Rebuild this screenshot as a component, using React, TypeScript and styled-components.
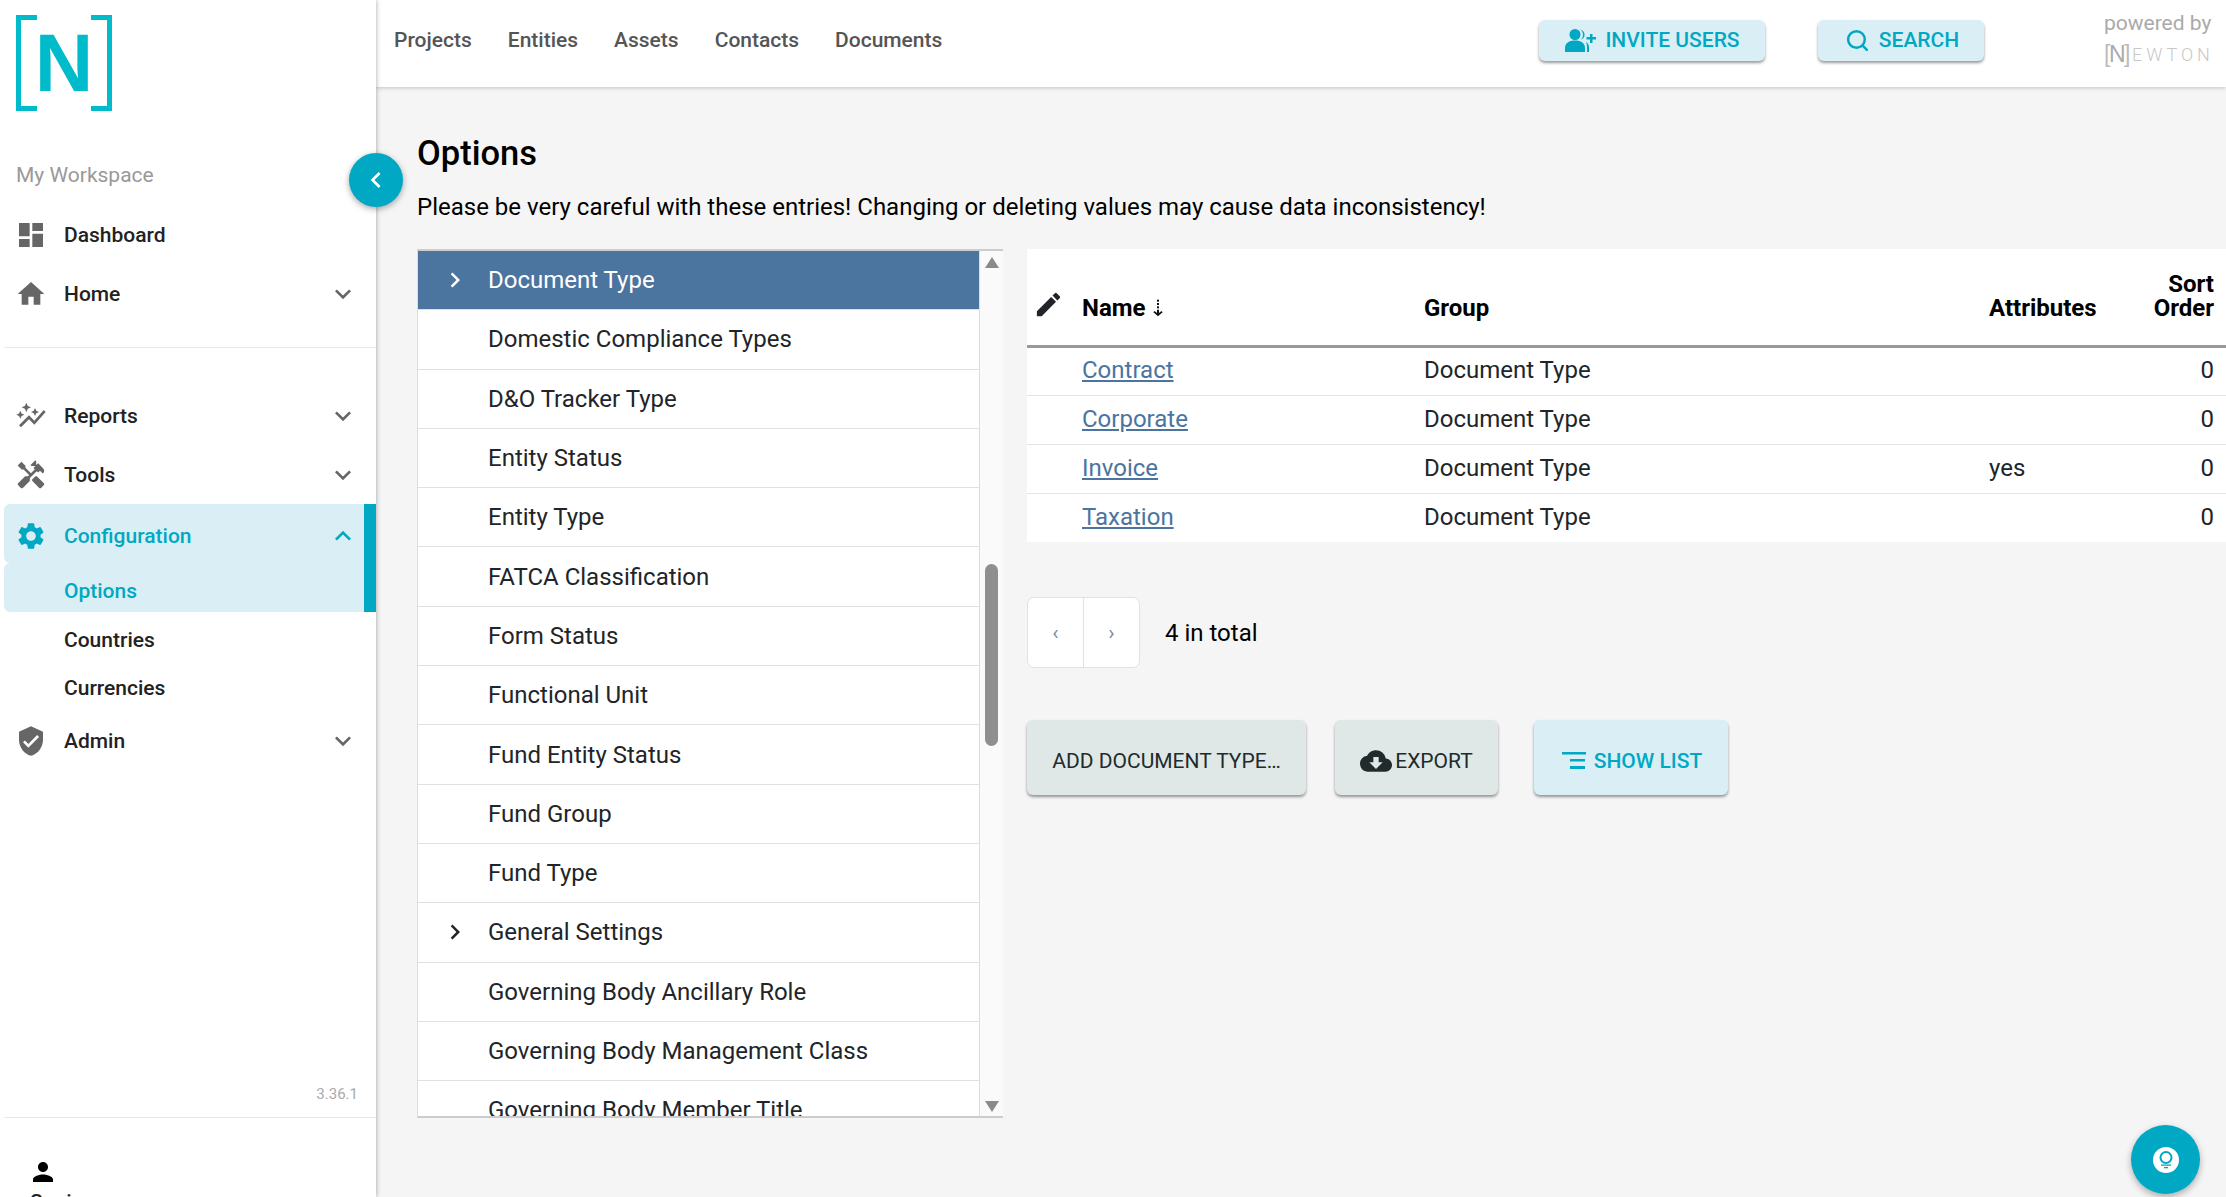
import React from "react";
import styled, { createGlobalStyle } from "styled-components";
import {
	MdDashboard,
	MdHome,
	MdExpandMore,
	MdExpandLess,
	MdAutoGraph,
	MdHandyman,
	MdSettings,
	MdVerifiedUser,
	MdPerson,
	MdEdit,
	MdCloudDownload,
	MdChevronLeft,
	MdChevronRight,
} from "react-icons/md";
import { LuSearch } from "react-icons/lu";

const teal = "#00a8c3";
const paleTeal = "#daeff5";

const GlobalStyle = createGlobalStyle`
	html, body {
		margin: 0;
		padding: 0;
		height: 100%;
		overflow: hidden;
	}
	body {
		font-family: Roboto, "Liberation Sans", sans-serif;
		color: #212529;
		background: #f5f5f5;
	}
	* {
		box-sizing: border-box;
	}
`;

const Page = styled.div`
	display: grid;
	grid-template-columns: 376px 1fr;
	grid-template-rows: 87px 1fr;
	height: 100vh;
	overflow: hidden;
	position: relative;
`;

// Left column
const Sidebar = styled.aside`
	grid-row: 1 / span 2;
	grid-column: 1;
	position: relative;
	z-index: 2;
	display: flex;
	flex-direction: column;
	padding-left: 4px;
	background: #fff;
	box-shadow: 1px 0 4px rgba(0, 0, 0, 0.25);
	height: 1197px;
`;

const LogoArea = styled.div`
	height: 150px;
	padding: 15px 0 0 12px;
`;

const LogoMark = styled.div`
	position: relative;
	display: flex;
	align-items: center;
	justify-content: center;
	width: 96px;
	height: 96px;
	font-family: "Liberation Sans", sans-serif;
	font-weight: 700;
	font-size: 81px;
	line-height: 1;
	color: #00bbca;
`;

const Bracket = styled.span<{ $side: "left" | "right" }>`
	position: absolute;
	top: 0;
	bottom: 0;
	width: 21px;
	border: 5px solid #00bbca;
	${(p) => (p.$side === "left" ? "left: 0; border-right: 0;" : "right: 0; border-left: 0;")}
`;

const WorkspaceLabel = styled.div`
	height: 50px;
	padding-left: 12px;
	display: flex;
	align-items: center;
	font-size: 21px;
	color: #999;
	margin-bottom: 5px;
`;

const NavRow = styled.div<{ $active?: boolean }>`
	display: flex;
	align-items: center;
	height: 59px;
	padding: ${(p) => (p.$active ? "4px 5px 0 11px" : "0 17px 0 11px")};
	font-size: 21px;
	font-weight: 500;
	color: ${(p) => (p.$active ? teal : "#222")};
	background: ${(p) => (p.$active ? paleTeal : "transparent")};
	border-radius: ${(p) => (p.$active ? "6px 0 0 6px" : "0")};
	svg.lead {
		width: 32px;
		height: 32px;
		margin-right: 17px;
		color: ${(p) => (p.$active ? teal : "#666")};
		flex-shrink: 0;
	}
	svg.caret {
		width: 32px;
		height: 32px;
		margin-left: auto;
		color: ${(p) => (p.$active ? teal : "#666")};
	}
`;

const ActiveGroup = styled.div`
	border-right: 12px solid ${teal};
`;

const SubRow = styled.div<{ $active?: boolean }>`
	display: flex;
	align-items: center;
	height: ${(p) => (p.$active ? "49px" : "48px")};
	padding: ${(p) => (p.$active ? "7px 0 0 60px" : "0 0 0 60px")};
	font-size: 21px;
	font-weight: 500;
	color: ${(p) => (p.$active ? teal : "#222")};
	background: ${(p) => (p.$active ? paleTeal : "transparent")};
	border-radius: ${(p) => (p.$active ? "6px 0 0 6px" : "0")};
`;

const SubList = styled.div`
	height: 99px;
	padding-top: 4px;
`;

const Rule = styled.hr<{ $spaced?: boolean }>`
	border: 0;
	border-top: 1px solid #e8e8e8;
	margin: ${(p) => (p.$spaced ? "24px 0 38px" : "0")};
`;

const Version = styled.div`
	margin-top: auto;
	padding: 0 18px 14px 0;
	text-align: right;
	font-size: 15px;
	color: #aaa;
`;

const UserBlock = styled.div`
	height: 79px;
	padding: 39px 0 0 24px;
	overflow: hidden;
	font-size: 21px;
	font-weight: 500;
	line-height: 1;
	svg {
		display: block;
		width: 30px;
		height: 30px;
		margin-bottom: 5px;
		color: #000;
	}
	span {
		margin-left: 2px;
	}
`;

const CollapseButton = styled.button`
	position: absolute;
	left: 349px;
	top: 153px;
	width: 54px;
	height: 54px;
	padding: 0;
	border: 0;
	border-radius: 50%;
	background: ${teal};
	color: #fff;
	display: flex;
	align-items: center;
	justify-content: center;
	box-shadow: 0 2px 6px rgba(0, 0, 0, 0.35);
	svg {
		width: 32px;
		height: 32px;
	}
`;

// Top bar
const TopBar = styled.header`
	grid-column: 2;
	grid-row: 1;
	position: relative;
	z-index: 1;
	display: flex;
	align-items: center;
	padding: 0 0 7px 18px;
	background: #fff;
	box-shadow: 0 1px 4px rgba(0, 0, 0, 0.2);
`;

const TopLink = styled.a`
	font-size: 21px;
	font-weight: 500;
	color: #555;
	margin-right: 36px;
`;

const TopActions = styled.div`
	margin-left: auto;
	display: flex;
	align-items: center;
`;

const Button = styled.button<{ $tone?: "teal" | "grey"; $height?: number }>`
	display: inline-flex;
	align-items: center;
	justify-content: center;
	height: 41px;
	padding: 0;
	border: 0;
	border-radius: 6px;
	font-family: inherit;
	font-size: 21px;
	text-transform: uppercase;
	font-weight: ${(p) => (p.$tone === "grey" ? 400 : 500)};
	color: ${(p) => (p.$tone === "grey" ? "#212b2b" : teal)};
	background: ${(p) => (p.$tone === "grey" ? "#dfe8e7" : paleTeal)};
	box-shadow: 0 2px 3px rgba(0, 0, 0, 0.4);
	white-space: nowrap;
`;

const InviteButton = styled(Button)`
	width: 226px;
	margin-right: 53px;
	svg {
		width: 32px;
		height: 24px;
		margin-right: 9px;
	}
`;

const SearchButton = styled(Button)`
	width: 166px;
	margin-right: 120px;
	padding-left: 2px;
	svg {
		width: 25px;
		height: 25px;
		margin-right: 9px;
		stroke-width: 2.4;
	}
`;

const PoweredBy = styled.div`
	display: flex;
	flex-direction: column;
	width: 109px;
	margin-right: 13px;
	color: #aaa;
	font-size: 21px;
	line-height: 1;
	white-space: nowrap;
`;

const NewtonMark = styled.div`
	display: flex;
	align-items: center;
	margin-top: 8px;
	height: 25px;
	color: #c8c8c8;
	font-size: 18px;
	letter-spacing: 4px;
	font-weight: 300;
`;

const NewtonBox = styled.span`
	font-family: "Liberation Sans", sans-serif;
	font-size: 23px;
	letter-spacing: -1.5px;
	color: #bbb;
	margin-right: 3px;
	b {
		color: #aaa;
	}
`;

// Main content
const Main = styled.main`
	grid-column: 2;
	grid-row: 2;
	padding: 44px 0 0 41px;
	min-width: 0;
`;

const Title = styled.h1`
	margin: 0;
	font-size: 34.5px;
	line-height: 44px;
	font-weight: 500;
	color: #000;
`;

const Warning = styled.p`
	margin: 15px 0 0;
	font-size: 24px;
	line-height: 34px;
	color: #000;
`;

const Columns = styled.div`
	display: flex;
	margin-top: 25px;
	align-items: flex-start;
`;

const ListPanel = styled.div`
	display: flex;
	width: 586px;
	height: 869px;
	border-top: 2px solid #ccc;
	border-bottom: 2px solid #ccc;
	border-left: 1px solid #ddd;
	flex-shrink: 0;
	overflow: hidden;
`;

const ListRows = styled.ul`
	flex: 1;
	margin: 0;
	padding: 0;
	list-style: none;
	overflow: hidden;
	background: #fff;
	border-right: 1px solid #ddd;
`;

const ListRow = styled.li<{ $selected?: boolean }>`
	display: flex;
	align-items: center;
	height: 59.3px;
	font-size: 24px;
	color: ${(p) => (p.$selected ? "#fff" : "#212529")};
	background: ${(p) => (p.$selected ? "#4b749f" : "#fff")};
	border-bottom: 1px solid #e0e0e0;
	svg {
		width: 30px;
		height: 30px;
		margin-left: 22px;
	}
`;

const ListLabel = styled.span<{ $indent?: boolean }>`
	margin-left: ${(p) => (p.$indent ? "70px" : "18px")};
`;

const Scrollbar = styled.div`
	width: 23px;
	background: #fafafa;
	display: flex;
	flex-direction: column;
	align-items: center;
	padding: 6px 0 4px;
`;

const ScrollArrow = styled.span<{ $dir: "up" | "down" }>`
	width: 0;
	height: 0;
	border-left: 7.5px solid transparent;
	border-right: 7.5px solid transparent;
	${(p) => (p.$dir === "up" ? "border-bottom: 11px solid #8a8a8a;" : "border-top: 11px solid #8a8a8a; margin-top: auto;")}
`;

const ScrollThumb = styled.span`
	width: 13px;
	height: 182px;
	margin-top: 296px;
	border-radius: 7px;
	background: #8f8f8f;
`;

const RightPane = styled.section`
	flex: 1;
	min-width: 0;
	margin-left: 24px;
`;

const DataTable = styled.table`
	width: 100%;
	table-layout: fixed;
	border-collapse: collapse;
	background: #fff;
	font-size: 24px;
`;

const HeadCell = styled.th<{ $width?: number; $right?: boolean }>`
	width: ${(p) => (p.$width ? `${p.$width}px` : "auto")};
	height: 97px;
	padding: 0 ${(p) => (p.$right ? "12px" : "0")} 25px 0;
	vertical-align: bottom;
	text-align: ${(p) => (p.$right ? "right" : "left")};
	font-weight: 700;
	font-size: 24px;
	line-height: 24px;
	color: #000;
	border-bottom: 3px solid #999;
	svg.pencil {
		display: block;
		width: 31px;
		height: 31px;
		margin-left: 6px;
		color: #212529;
	}
	svg.sort {
		width: 10px;
		height: 20px;
		margin-left: 7px;
		vertical-align: -2px;
	}
`;

const BodyRow = styled.tr`
	height: 49px;
	border-bottom: 1px solid #e4e4e4;
	&:last-child {
		border-bottom: 0;
	}
`;

const BodyCell = styled.td<{ $right?: boolean }>`
	padding: 0 ${(p) => (p.$right ? "12px" : "0")} 2px 0;
	text-align: ${(p) => (p.$right ? "right" : "left")};
	color: #212529;
`;

const NameLink = styled.a`
	color: #4b749f;
	text-decoration: underline;
`;

const PagerRow = styled.div`
	display: flex;
	align-items: center;
	margin-top: 55px;
`;

const Pager = styled.div`
	display: flex;
	width: 113px;
	height: 71px;
	background: #fff;
	border: 1px solid #e2e2e2;
	border-radius: 7px;
`;

const PagerCell = styled.span`
	flex: 1;
	display: flex;
	align-items: center;
	justify-content: center;
	color: #7b8a99;
	font-size: 21px;
	& + & {
		border-left: 1px solid #e2e2e2;
	}
`;

const TotalText = styled.span`
	margin-left: 25px;
	font-size: 24px;
	color: #000;
`;

const ActionRow = styled.div`
	display: flex;
	margin-top: 52px;
`;

// The tall buttons under the table, their labels sit a little low
const ActionButton = styled(Button)`
	height: 75px;
	padding-top: 6px;
`;

const AddButton = styled(ActionButton)`
	width: 279px;
`;

const ExportButton = styled(ActionButton)`
	width: 163px;
	margin-left: 29px;
	svg {
		width: 32px;
		height: 32px;
		margin-right: 3px;
	}
`;

const ShowListButton = styled(ActionButton)`
	width: 194px;
	margin-left: 36px;
	padding-left: 2px;
	svg {
		width: 24px;
		height: 17px;
		margin-right: 8px;
	}
`;

const HelpFab = styled.button`
	position: absolute;
	left: 2131px;
	top: 1125px;
	z-index: 3;
	width: 69px;
	height: 69px;
	padding: 0;
	border: 0;
	border-radius: 50%;
	background: ${teal};
	display: flex;
	align-items: center;
	justify-content: center;
	box-shadow: 0 3px 7px rgba(0, 0, 0, 0.3);
`;

const optionRows = [
	"Domestic Compliance Types",
	"D&O Tracker Type",
	"Entity Status",
	"Entity Type",
	"FATCA Classification",
	"Form Status",
	"Functional Unit",
	"Fund Entity Status",
	"Fund Group",
	"Fund Type",
	"General Settings",
	"Governing Body Ancillary Role",
	"Governing Body Management Class",
	"Governing Body Member Title",
];

const docRows = [
	{ name: "Contract", attrs: "" },
	{ name: "Corporate", attrs: "" },
	{ name: "Invoice", attrs: "yes" },
	{ name: "Taxation", attrs: "" },
];

function InviteIcon() {
	return (
		<svg viewBox="0 0 32 24" fill="currentColor">
			<circle cx="11" cy="6.5" r="5.5" />
			<path d="M1 24v-4c0-5 4-7.5 10-7.5s10 2.5 10 7.5v4z" />
			<path d="M16 1.5c3 .6 4.6 2.7 4.6 5.2s-1.6 4.4-4 5c1.7-1.3 2.4-3 2.4-5s-1-4-3-5.2z" />
			<path d="M22 14c2 1.2 3 3 3 5.5V24h-2v-4.5c0-2-.3-3.7-1-5.5z" />
			<path d="M26 6h2.5v3H32v2.5h-3.5V15H26v-3.5h-3.5V9H26z" />
		</svg>
	);
}

function ShowListIcon() {
	return (
		<svg viewBox="0 0 24 17" fill="currentColor">
			<rect x="0" y="0" width="24" height="2.5" />
			<rect x="8" y="7" width="15" height="2.5" />
			<rect x="8" y="14" width="15" height="3" />
		</svg>
	);
}

function SortIcon() {
	return (
		<svg className="sort" viewBox="0 0 12 20" fill="#111">
			<rect x="4.8" y="0" width="2.4" height="2.4" />
			<rect x="4.8" y="4" width="2.4" height="2.4" />
			<rect x="4.8" y="8" width="2.4" height="2.4" />
			<path d="M4.8 12h2.4v4l3-2.5 1.3 1.5L6 20 .5 15l1.3-1.5 3 2.5z" />
		</svg>
	);
}

function BulbIcon() {
	return (
		<svg width="26" height="26" viewBox="0 0 26 26">
			<circle cx="13" cy="13" r="13" fill="#fff" />
			<circle cx="13" cy="10.5" r="5.5" fill="none" stroke={teal} strokeWidth="2" />
			<rect x="8" y="17.5" width="10" height="1.3" fill={teal} />
			<rect x="11" y="20" width="4" height="1.3" fill={teal} />
		</svg>
	);
}

export default function App() {
	return (
		<Page>
			<GlobalStyle />
			<Sidebar>
				<LogoArea>
					<LogoMark>
						<Bracket $side="left" />
						N
						<Bracket $side="right" />
					</LogoMark>
				</LogoArea>
				<WorkspaceLabel>My Workspace</WorkspaceLabel>
				<NavRow>
					<MdDashboard className="lead" />
					Dashboard
				</NavRow>
				<NavRow>
					<MdHome className="lead" />
					Home
					<MdExpandMore className="caret" />
				</NavRow>
				<Rule $spaced />
				<NavRow>
					<MdAutoGraph className="lead" />
					Reports
					<MdExpandMore className="caret" />
				</NavRow>
				<NavRow>
					<MdHandyman className="lead" />
					Tools
					<MdExpandMore className="caret" />
				</NavRow>
				<ActiveGroup>
					<NavRow $active>
						<MdSettings className="lead" />
						Configuration
						<MdExpandLess className="caret" />
					</NavRow>
					<SubRow $active>Options</SubRow>
				</ActiveGroup>
				<SubList>
					<SubRow>Countries</SubRow>
					<SubRow>Currencies</SubRow>
				</SubList>
				<NavRow>
					<MdVerifiedUser className="lead" />
					Admin
					<MdExpandMore className="caret" />
				</NavRow>
				<Version>3.36.1</Version>
				<Rule />
				<UserBlock>
					<MdPerson />
					<span>Sonia</span>
				</UserBlock>
				<CollapseButton>
					<MdChevronLeft />
				</CollapseButton>
			</Sidebar>

			<TopBar>
				<TopLink>Projects</TopLink>
				<TopLink>Entities</TopLink>
				<TopLink>Assets</TopLink>
				<TopLink>Contacts</TopLink>
				<TopLink>Documents</TopLink>
				<TopActions>
					<InviteButton>
						<InviteIcon />
						Invite users
					</InviteButton>
					<SearchButton>
						<LuSearch />
						Search
					</SearchButton>
					<PoweredBy>
						powered by
						<NewtonMark>
							<NewtonBox>
								[<b>N</b>]
							</NewtonBox>
							EWTON
						</NewtonMark>
					</PoweredBy>
				</TopActions>
			</TopBar>

			<Main>
				<Title>Options</Title>
				<Warning>Please be very careful with these entries! Changing or deleting values may cause data inconsistency!</Warning>
				<Columns>
					<ListPanel>
						<ListRows>
							<ListRow $selected>
								<MdChevronRight />
								<ListLabel>Document Type</ListLabel>
							</ListRow>
							{optionRows.map((label) =>
								label === "General Settings" ? (
									<ListRow key={label}>
										<MdChevronRight />
										<ListLabel>{label}</ListLabel>
									</ListRow>
								) : (
									<ListRow key={label}>
										<ListLabel $indent>{label}</ListLabel>
									</ListRow>
								)
							)}
						</ListRows>
						<Scrollbar>
							<ScrollArrow $dir="up" />
							<ScrollThumb />
							<ScrollArrow $dir="down" />
						</Scrollbar>
					</ListPanel>
					<RightPane>
						<DataTable>
							<thead>
								<tr>
									<HeadCell $width={55}>
										<MdEdit className="pencil" />
									</HeadCell>
									<HeadCell $width={342}>
										Name
										<SortIcon />
									</HeadCell>
									<HeadCell $width={565}>Group</HeadCell>
									<HeadCell $width={135}>Attributes</HeadCell>
									<HeadCell $right>
										Sort
										<br />
										Order
									</HeadCell>
								</tr>
							</thead>
							<tbody>
								{docRows.map((row) => (
									<BodyRow key={row.name}>
										<BodyCell />
										<BodyCell>
											<NameLink href="#">{row.name}</NameLink>
										</BodyCell>
										<BodyCell>Document Type</BodyCell>
										<BodyCell>{row.attrs}</BodyCell>
										<BodyCell $right>0</BodyCell>
									</BodyRow>
								))}
							</tbody>
						</DataTable>
						<PagerRow>
							<Pager>
								<PagerCell>‹</PagerCell>
								<PagerCell>›</PagerCell>
							</Pager>
							<TotalText>4 in total</TotalText>
						</PagerRow>
						<ActionRow>
							<AddButton $tone="grey">Add document type…</AddButton>
							<ExportButton $tone="grey">
								<MdCloudDownload />
								Export
							</ExportButton>
							<ShowListButton>
								<ShowListIcon />
								Show list
							</ShowListButton>
						</ActionRow>
					</RightPane>
				</Columns>
			</Main>

			<HelpFab>
				<BulbIcon />
			</HelpFab>
		</Page>
	);
}
